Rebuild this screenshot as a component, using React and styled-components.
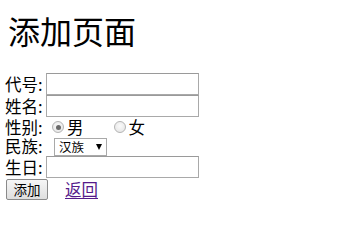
import React from "react";
import styled, { createGlobalStyle } from "styled-components";

const Global = createGlobalStyle`
  html, body { margin: 0; padding: 0; background: #fff; }
  body { font-family: "Noto Sans CJK SC", "Liberation Serif", serif; color: #000; }
`;

const Page = styled.div`
  padding: 14px 0 0 5px;
`;

const Title = styled.h1`
  margin: 0 0 27px 3px;
  font-size: 32px;
  font-weight: 400;
  line-height: 32px;
  height: 32px;
`;

const Row = styled.div`
  display: flex;
  align-items: center;
  height: ${(p) => p.$h}px;
  overflow: visible;
`;

const Label = styled.span`
  width: 41px;
  font-size: 16.5px;
  line-height: 17px;
  height: 17px;
  white-space: nowrap;
  flex: none;
`;

const TextInput = styled.input`
  box-sizing: border-box;
  width: 153px;
  height: 22px;
  border: 1px solid #a9a9a9;
  border-top-color: #9a9a9a;
  margin: 0;
  padding: 0 2px;
  background: #fff;
  outline: none;
`;

const RadioGroup = styled.label`
  display: flex;
  align-items: center;
  margin-left: ${(p) => p.$ml}px;
  font-size: 16.5px;
  line-height: 17px;
  height: 17px;
`;

const RadioCircle = styled.span`
  box-sizing: border-box;
  width: 12px;
  height: 12px;
  border-radius: 50%;
  border: 1px solid #b4b4b4;
  background: radial-gradient(circle at 50% 40%, #fafafa 0%, #e2e2e2 100%);
  display: flex;
  align-items: center;
  justify-content: center;
  margin-right: 3px;
  &::after {
    content: "";
    width: 5px;
    height: 5px;
    border-radius: 50%;
    background: ${(p) => (p.$checked ? "#6a6a6a" : "transparent")};
  }
`;

const SelectBox = styled.div`
  box-sizing: border-box;
  margin-left: 8px;
  width: 53px;
  height: 18px;
  border: 1px solid #a9a9a9;
  display: flex;
  align-items: center;
  justify-content: space-between;
  padding: 0 4px 0 4px;
  font-size: 12.5px;
  line-height: 14px;
  background: #fff;
`;

const Arrow = styled.span`
  width: 0;
  height: 0;
  border-left: 3.5px solid transparent;
  border-right: 3.5px solid transparent;
  border-top: 6px solid #000;
`;

const Button = styled.button`
  box-sizing: border-box;
  width: 42px;
  height: 21px;
  margin: 0 0 0 1px;
  padding: 0;
  font-family: "Noto Sans CJK SC", sans-serif;
  font-size: 13.5px;
  line-height: 16px;
  color: #000;
  border: 1px solid #8a8a8a;
  border-radius: 2px;
  background: linear-gradient(#f6f6f6, #dedede);
`;

const BackLink = styled.a`
  margin-left: 17px;
  font-size: 16.5px;
  line-height: 17px;
  color: #551a8b;
  text-decoration: underline;
  text-underline-offset: 2px;
`;

export default function App() {
  return (
    <>
      <Global />
      <Page>
        <Title>添加页面</Title>
        <Row $h={22}>
          <Label>代号:</Label>
          <TextInput type="text" />
        </Row>
        <Row $h={22}>
          <Label>姓名:</Label>
          <TextInput type="text" />
        </Row>
        <Row $h={20}>
          <Label>性别:</Label>
          <RadioGroup $ml={6}>
            <RadioCircle $checked />
            男
          </RadioGroup>
          <RadioGroup $ml={30}>
            <RadioCircle />
            女
          </RadioGroup>
        </Row>
        <Row $h={19}>
          <Label>民族:</Label>
          <SelectBox>
            <span>汉族</span>
            <Arrow />
          </SelectBox>
        </Row>
        <Row $h={22}>
          <Label>生日:</Label>
          <TextInput type="text" />
        </Row>
        <Row $h={22}>
          <Button type="button">添加</Button>
          <BackLink href="#">返回</BackLink>
        </Row>
      </Page>
    </>
  );
}
